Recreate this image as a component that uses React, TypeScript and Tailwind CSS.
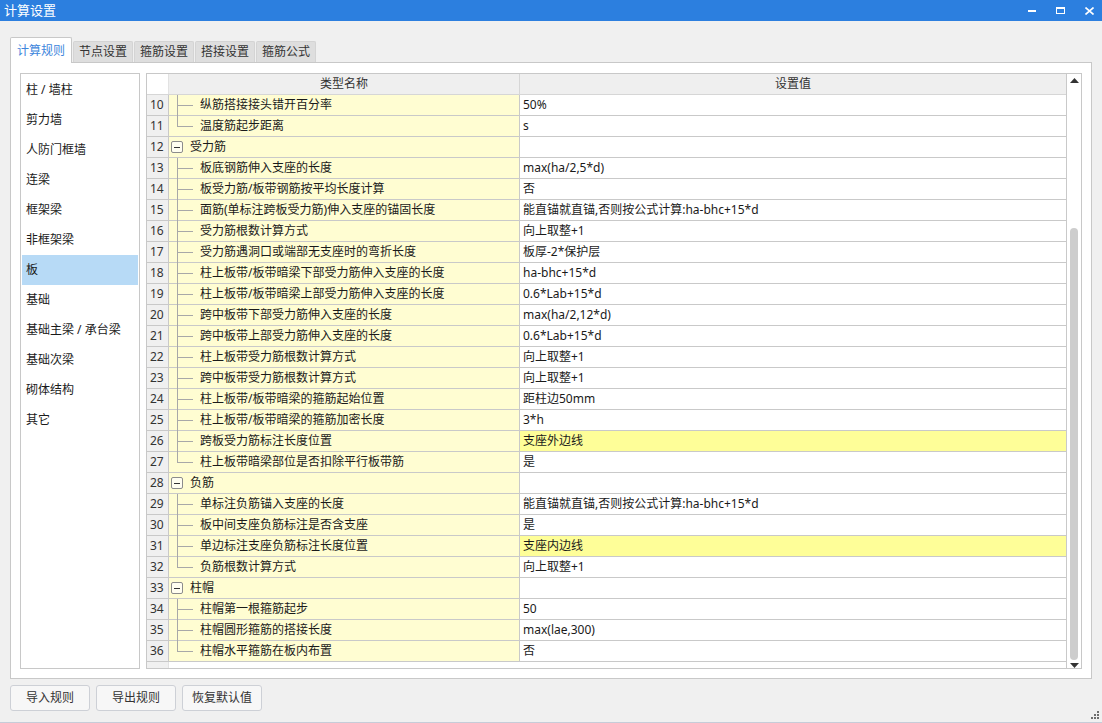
import React from "react";

type Row = {
  n: number;
  name: string;
  value?: string;
  group?: boolean;
  last?: boolean;
  hl?: boolean;
};

const rows: Row[] = [
  { n: 10, name: "纵筋搭接接头错开百分率", value: "50%" },
  { n: 11, name: "温度筋起步距离", value: "s", last: true },
  { n: 12, name: "受力筋", group: true },
  { n: 13, name: "板底钢筋伸入支座的长度", value: "max(ha/2,5*d)" },
  { n: 14, name: "板受力筋/板带钢筋按平均长度计算", value: "否" },
  { n: 15, name: "面筋(单标注跨板受力筋)伸入支座的锚固长度", value: "能直锚就直锚,否则按公式计算:ha-bhc+15*d" },
  { n: 16, name: "受力筋根数计算方式", value: "向上取整+1" },
  { n: 17, name: "受力筋遇洞口或端部无支座时的弯折长度", value: "板厚-2*保护层" },
  { n: 18, name: "柱上板带/板带暗梁下部受力筋伸入支座的长度", value: "ha-bhc+15*d" },
  { n: 19, name: "柱上板带/板带暗梁上部受力筋伸入支座的长度", value: "0.6*Lab+15*d" },
  { n: 20, name: "跨中板带下部受力筋伸入支座的长度", value: "max(ha/2,12*d)" },
  { n: 21, name: "跨中板带上部受力筋伸入支座的长度", value: "0.6*Lab+15*d" },
  { n: 22, name: "柱上板带受力筋根数计算方式", value: "向上取整+1" },
  { n: 23, name: "跨中板带受力筋根数计算方式", value: "向上取整+1" },
  { n: 24, name: "柱上板带/板带暗梁的箍筋起始位置", value: "距柱边50mm" },
  { n: 25, name: "柱上板带/板带暗梁的箍筋加密长度", value: "3*h" },
  { n: 26, name: "跨板受力筋标注长度位置", value: "支座外边线", hl: true },
  { n: 27, name: "柱上板带暗梁部位是否扣除平行板带筋", value: "是", last: true },
  { n: 28, name: "负筋", group: true },
  { n: 29, name: "单标注负筋锚入支座的长度", value: "能直锚就直锚,否则按公式计算:ha-bhc+15*d" },
  { n: 30, name: "板中间支座负筋标注是否含支座", value: "是" },
  { n: 31, name: "单边标注支座负筋标注长度位置", value: "支座内边线", hl: true },
  { n: 32, name: "负筋根数计算方式", value: "向上取整+1", last: true },
  { n: 33, name: "柱帽", group: true },
  { n: 34, name: "柱帽第一根箍筋起步", value: "50" },
  { n: 35, name: "柱帽圆形箍筋的搭接长度", value: "max(lae,300)" },
  { n: 36, name: "柱帽水平箍筋在板内布置", value: "否", last: true },
];

const categories = [
  "柱 / 墙柱",
  "剪力墙",
  "人防门框墙",
  "连梁",
  "框架梁",
  "非框架梁",
  "板",
  "基础",
  "基础主梁 / 承台梁",
  "基础次梁",
  "砌体结构",
  "其它",
];

const tabs = ["计算规则", "节点设置", "箍筋设置", "搭接设置", "箍筋公式"];

function NameCell({ row }: { row: Row }) {
  if (row.group) {
    return (
      <div className="relative h-full w-[351px] shrink-0 border-r border-[#c9c9c9] bg-[#fffdd2] flex items-center">
        <span className="ml-[2px] flex h-[12px] w-[12px] items-center justify-center rounded-[2px] border border-[#8c8c8c] bg-[#fffef0]">
          <span className="block h-px w-[6px] bg-[#333]" />
        </span>
        <span className="ml-[7px]">{row.name}</span>
      </div>
    );
  }
  return (
    <div className="relative h-full w-[351px] shrink-0 border-r border-[#c9c9c9] bg-[#fffdd2] flex items-center">
      <span
        className={
          row.last
            ? "absolute left-[8px] top-0 h-[10px] w-px bg-[#a8a8a8]"
            : "absolute left-[8px] top-0 h-[21px] w-px bg-[#a8a8a8]"
        }
      />
      <span className="absolute left-[8px] top-[10px] h-px w-[16px] bg-[#a8a8a8]" />
      <span className="pl-[31px]">{row.name}</span>
    </div>
  );
}

export default function App() {
  return (
    <div className="relative flex h-[723px] w-[1102px] flex-col overflow-hidden bg-[#f0f0f0] font-['Noto_Sans','Noto_Sans_CJK_SC',sans-serif] text-[12px] text-[#1a1a1a]">
      {/* title bar */}
      <div className="flex h-[21px] shrink-0 items-center bg-[#2c7fdf] text-white">
        <span className="pl-[4px] text-[13px] leading-none">计算设置</span>
        <div className="ml-auto flex items-center">
          <span className="mr-[20px] mt-[1px] block h-[2px] w-[8px] bg-white" />
          <span className="mr-[20px] block h-[7px] w-[9px] border border-t-2 border-white" />
          <svg width="9" height="8" viewBox="0 0 9 8" className="mr-[8px]">
            <path d="M0.5 0.5 L8.5 7.5 M8.5 0.5 L0.5 7.5" stroke="white" strokeWidth="1.6" />
          </svg>
        </div>
      </div>

      <div className="flex flex-col px-[10px] pt-[16px]">
        {/* tabs */}
        <div className="relative z-10 flex h-[25px] items-end">
          {tabs.map((t, i) =>
            i === 0 ? (
              <div
                key={t}
                className="-mb-px flex h-[26px] w-[62px] items-center justify-center rounded-t-[2px] border border-b-0 border-[#c8c8c8] bg-white text-[#3d86dc]"
              >
                {t}
              </div>
            ) : (
              <div
                key={t}
                className="ml-px flex h-[21px] w-[60px] items-center justify-center rounded-t-[2px] border border-b-0 border-[#d4d4d4] bg-[#dedede] text-[#333]"
              >
                {t}
              </div>
            )
          )}
        </div>

        {/* tab panel */}
        <div className="flex h-[617px] gap-[6px] border border-[#c8c8c8] bg-white pl-[9px] pr-[9px] pt-[10px] pb-[9px]">
          {/* category list */}
          <div className="w-[120px] shrink-0 border border-[#c8c8c8] bg-white pt-[1px]">
            {categories.map((c) => (
              <div
                key={c}
                className={
                  c === "板"
                    ? "mx-px flex h-[30px] items-center bg-[#b7daf6] pl-[4px]"
                    : "mx-px flex h-[30px] items-center pl-[4px]"
                }
              >
                {c}
              </div>
            ))}
          </div>

          {/* settings table */}
          <div className="flex min-w-0 flex-1 border border-[#c8c8c8] bg-white">
            <div className="flex min-w-0 flex-1 flex-col border-r border-[#c9c9c9]">
              <div className="flex h-[21px] shrink-0 border-b border-[#d6d6d6] text-[#333]">
                <div className="h-full w-[22px] shrink-0 border-r border-[#e2e2e2] bg-white" />
                <div className="flex h-full w-[351px] shrink-0 items-center justify-center border-r border-[#d6d6d6] bg-[#efefef]">
                  类型名称
                </div>
                <div className="flex h-full flex-1 items-center justify-center bg-[#efefef]">设置值</div>
              </div>
              {rows.map((r) => (
                <div key={r.n} className="flex h-[21px] shrink-0 border-b border-[#c9c9c9]">
                  <div className="flex h-full w-[22px] shrink-0 items-center border-r border-[#c9c9c9] bg-[#f0f0f0] pl-[3px] text-[#333]">
                    {r.n}
                  </div>
                  <NameCell row={r} />
                  <div
                    className={
                      r.hl
                        ? "flex h-full flex-1 items-center bg-[#fefe98] pl-[3px]"
                        : "flex h-full flex-1 items-center bg-white pl-[3px]"
                    }
                  >
                    {r.value}
                  </div>
                </div>
              ))}
              <div className="flex flex-1">
                <div className="w-[22px] shrink-0 border-r border-[#e2e2e2] bg-[#f0f0f0]" />
              </div>
            </div>

            {/* scrollbar */}
            <div className="flex w-[14px] shrink-0 flex-col items-center bg-white">
              <svg width="9" height="5" viewBox="0 0 9 5" className="mt-[4px]">
                <path d="M4.5 0 L9 5 L0 5 Z" fill="#333" />
              </svg>
              <div className="mt-[145px] h-[433px] w-[8px] rounded-[4px] bg-[#cdcdcd]" />
              <svg width="9" height="5" viewBox="0 0 9 5" className="mt-[3px]">
                <path d="M0 0 L9 0 L4.5 5 Z" fill="#333" />
              </svg>
            </div>
          </div>
        </div>

        {/* buttons */}
        <div className="mt-[6px] flex gap-[6px]">
          {["导入规则", "导出规则", "恢复默认值"].map((b) => (
            <button
              key={b}
              className="flex h-[26px] w-[80px] items-center justify-center rounded-[3px] border border-[#cdd0d6] bg-[#f7f7f7] text-[#333]"
            >
              {b}
            </button>
          ))}
        </div>
      </div>

      {/* resize grip */}
      <svg width="10" height="10" viewBox="0 0 10 10" className="absolute bottom-[3px] right-[2px]">
        <rect x="7" y="1" width="2" height="2" fill="#6e6e6e" />
        <rect x="4" y="4" width="2" height="2" fill="#6e6e6e" />
        <rect x="7" y="4" width="2" height="2" fill="#6e6e6e" />
        <rect x="1" y="7" width="2" height="2" fill="#6e6e6e" />
        <rect x="4" y="7" width="2" height="2" fill="#6e6e6e" />
        <rect x="7" y="7" width="2" height="2" fill="#6e6e6e" />
      </svg>
      <div className="absolute bottom-0 left-0 h-px w-full bg-[#c6ccd8]" />
    </div>
  );
}
